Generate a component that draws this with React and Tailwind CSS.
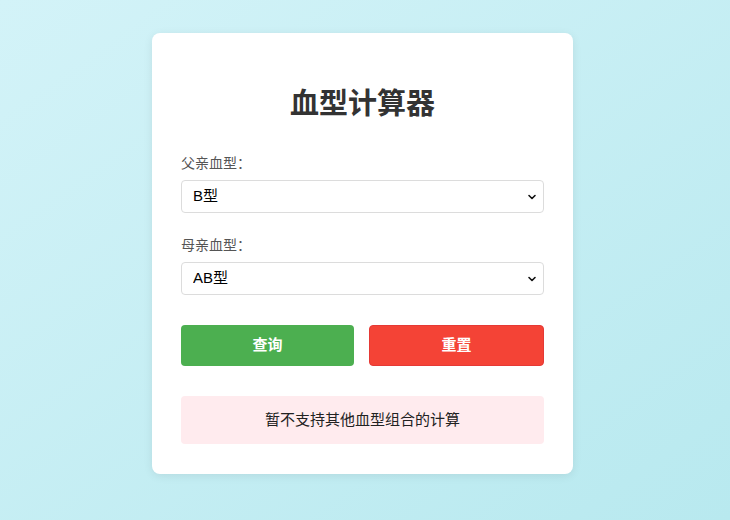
import React, { useState } from 'react';

const font = { fontFamily: '"Liberation Sans", "Noto Sans CJK SC", sans-serif' };

const Chevron = () => (
  <svg className="pointer-events-none absolute right-[7px] top-1/2 -translate-y-1/2" width="10" height="10" viewBox="0 0 10 10" fill="none">
    <path d="M2 3.5L5 6.5L8 3.5" stroke="#111" strokeWidth="1.6" strokeLinecap="round" strokeLinejoin="round" />
  </svg>
);

const BloodSelect = ({ value, onChange }) => (
  <div className="relative">
    <select
      value={value}
      onChange={(e) => onChange(e.target.value)}
      className="block h-[33px] w-full appearance-none rounded-[4px] border border-[#dcdcdc] bg-white px-[11px] text-[15px] text-black outline-none"
      style={font}
    >
      <option value="A">A型</option>
      <option value="B">B型</option>
      <option value="AB">AB型</option>
      <option value="O">O型</option>
    </select>
    <Chevron />
  </div>
);

export default function App() {
  const [father, setFather] = useState('B');
  const [mother, setMother] = useState('AB');

  return (
    <div
      className="flex min-h-[520px] w-full justify-center bg-gradient-to-br from-[#d3f3f8] to-[#b8e9ef] pr-[5px] pt-[33px]"
      style={font}
    >
      <div className="h-[441px] w-[421px] rounded-[8px] bg-white px-[29px] pt-[50px] shadow-[0_2px_10px_rgba(0,0,0,0.08)]">
        <h1 className="text-center text-[29px] font-bold leading-[42px] text-[#333]">血型计算器</h1>

        <label className="mt-[28px] block text-[14px] leading-[21px] text-[#555]">父亲血型：</label>
        <div className="mt-[6px]">
          <BloodSelect value={father} onChange={setFather} />
        </div>

        <label className="mt-[22px] block text-[14px] leading-[21px] text-[#555]">母亲血型：</label>
        <div className="mt-[6px]">
          <BloodSelect value={mother} onChange={setMother} />
        </div>

        <div className="mt-[30px] flex gap-[15px]">
          <button className="h-[41px] flex-1 rounded-[4px] bg-[#4caf50] text-[15px] font-bold text-white">查询</button>
          <button className="h-[41px] flex-1 rounded-[4px] border border-[#e53935] bg-[#f44336] text-[15px] font-bold text-white">重置</button>
        </div>

        <div className="mt-[30px] flex h-[48px] items-center justify-center rounded-[4px] bg-[#ffebee] text-[15px] text-[#222]">
          暂不支持其他血型组合的计算
        </div>
      </div>
    </div>
  );
}
